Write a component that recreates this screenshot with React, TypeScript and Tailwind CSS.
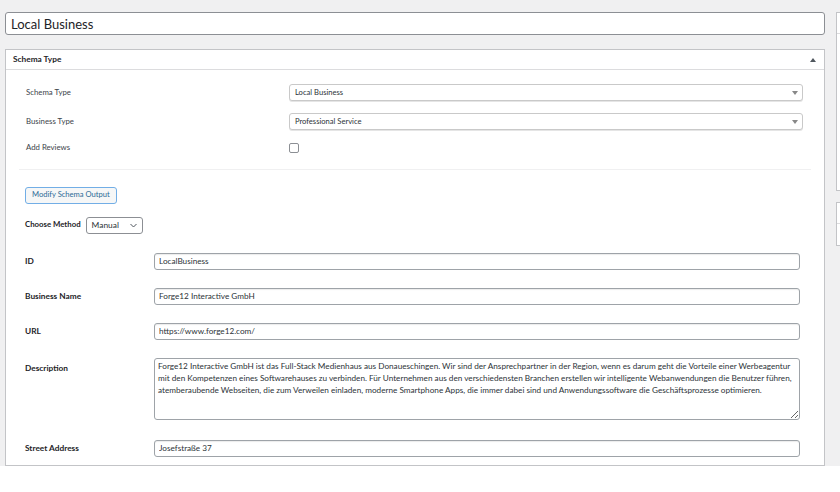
import React from 'react';

const font = { fontFamily: 'Lato, "Open Sans", Arial, sans-serif' };

const desc =
  'Forge12 Interactive GmbH ist das Full-Stack Medienhaus aus Donaueschingen. Wir sind der Ansprechpartner in der Region, wenn es darum geht die Vorteile einer Werbeagentur\nmit den Kompetenzen eines Softwarehauses zu verbinden. Für Unternehmen aus den verschiedensten Branchen erstellen wir intelligente Webanwendungen die Benutzer führen,\natemberaubende Webseiten, die zum Verweilen einladen, moderne Smartphone Apps, die immer dabei sind und Anwendungssoftware die Geschäftsprozesse optimieren.';

const SchemaRow: React.FC<{ label: string; children: React.ReactNode; className?: string }> = ({
  label,
  children,
  className,
}) => (
  <div className={`flex items-center ${className ?? ''}`}>
    <div className="w-[283px] pl-[20px] text-[7.8px] text-[#3c434a]">{label}</div>
    {children}
  </div>
);

const FakeSelect: React.FC<{ value: string }> = ({ value }) => (
  <div className="flex h-[17px] w-[514px] items-center justify-between rounded-[3px] border border-[#c9c9c9] bg-white pl-[5px] pr-[4px] text-[7.6px] text-[#2c3338] shadow-[0_1px_0_#e5e5e5]">
    <span>{value}</span>
    <span className="h-0 w-0 border-x-[3px] border-t-[4px] border-x-transparent border-t-[#888]" />
  </div>
);

const Field: React.FC<{ label: string; value: string; className?: string }> = ({ label, value, className }) => (
  <div className={`flex items-center ${className ?? ''}`}>
    <div className="w-[129px] text-[8.3px] font-bold text-[#1d2327]">{label}</div>
    <input
      readOnly
      value={value}
      className="h-[17px] w-[646px] rounded-[3px] border border-[#9ea3a8] bg-white px-[4px] text-[8.2px] text-[#2c3338] shadow-[inset_0_1px_1px_rgba(0,0,0,0.08)] outline-none"
    />
  </div>
);

export default function App() {
  return (
    <div className="h-[492px] w-[840px] overflow-hidden bg-white" style={font}>
      <div className="flex h-[466px] gap-[11px] overflow-hidden bg-[#f0f0f1] pl-[5px] pt-[12px]">
        {/* main column */}
        <div className="flex w-[820px] shrink-0 flex-col">
          <input
            readOnly
            value="Local Business"
            className="h-[23px] w-full rounded-[3px] border border-[#8c8f94] bg-white px-[5px] text-[13px] text-[#1d2327] outline-none"
          />

          <div className="mt-[14px] flex-1 border border-[#c3c4c7] bg-white">
            <div className="flex h-[20px] items-center justify-between border-b border-[#dcdcde] pl-[7px] pr-[8px]">
              <span className="text-[8.3px] font-bold text-[#1d2327]">Schema Type</span>
              <span className="h-0 w-0 border-x-[3px] border-b-[4px] border-x-transparent border-b-[#50575e]" />
            </div>

            <SchemaRow label="Schema Type" className="mt-[14px]">
              <FakeSelect value="Local Business" />
            </SchemaRow>
            <SchemaRow label="Business Type" className="mt-[12px]">
              <FakeSelect value="Professional Service" />
            </SchemaRow>
            <SchemaRow label="Add Reviews" className="mt-[12px]">
              <span className="block h-[10px] w-[10px] rounded-[2px] border border-[#8c8f94] bg-white" />
            </SchemaRow>

            <div className="mx-[13px] mt-[15px] border-t border-[#f0f0f1]" />

            <div className="pl-[19px]">
              <button className="mt-[17px] flex h-[17px] items-center rounded-[3px] border border-[#72aee6] bg-[#f6f7f7] px-[6px] text-[7.6px] text-[#2c6a96]">
                Modify Schema Output
              </button>

              <div className="mt-[13px] flex items-center gap-[5px]">
                <span className="text-[7.8px] font-bold text-[#1d2327]">Choose Method</span>
                <div className="flex h-[17px] w-[57px] items-center justify-between rounded-[3px] border border-[#8c8f94] bg-white pl-[5px] pr-[5px] text-[8.4px] text-[#2c3338]">
                  <span>Manual</span>
                  <svg width="7" height="5" viewBox="0 0 7 5" fill="none">
                    <path d="M0.5 1L3.5 4L6.5 1" stroke="#50575e" strokeWidth="1" />
                  </svg>
                </div>
              </div>

              <Field label="ID" value="LocalBusiness" className="mt-[19px]" />
              <Field label="Business Name" value="Forge12 Interactive GmbH" className="mt-[18px]" />
              <Field label="URL" value="https://www.forge12.com/" className="mt-[18px]" />

              <div className="mt-[18px] flex items-start">
                <div className="w-[129px] pt-[4px] text-[8.3px] font-bold text-[#1d2327]">Description</div>
                <textarea
                  readOnly
                  value={desc}
                  className="h-[62px] w-[646px] resize-y rounded-[3px] border border-[#9ea3a8] bg-white px-[3px] py-[1px] text-[8.2px] leading-[12px] text-[#2c3338] outline-none"
                  style={{ whiteSpace: 'pre', overflow: 'hidden' }}
                />
              </div>

              <Field label="Street Address" value="Josefstraße 37" className="mt-[20px]" />
            </div>
          </div>
        </div>

        {/* sidebar */}
        <div className="flex w-[280px] shrink-0 flex-col">
          <div className="h-[179px] border border-[#c3c4c7] bg-white">
            <div className="h-[21px] border-b border-[#dcdcde]" />
          </div>
          <div className="mt-[11px] border border-[#c3c4c7] bg-white">
            <div className="h-[21px] border-b border-[#dcdcde]" />
            <div className="h-[21px]" />
          </div>
        </div>
      </div>
    </div>
  );
}
